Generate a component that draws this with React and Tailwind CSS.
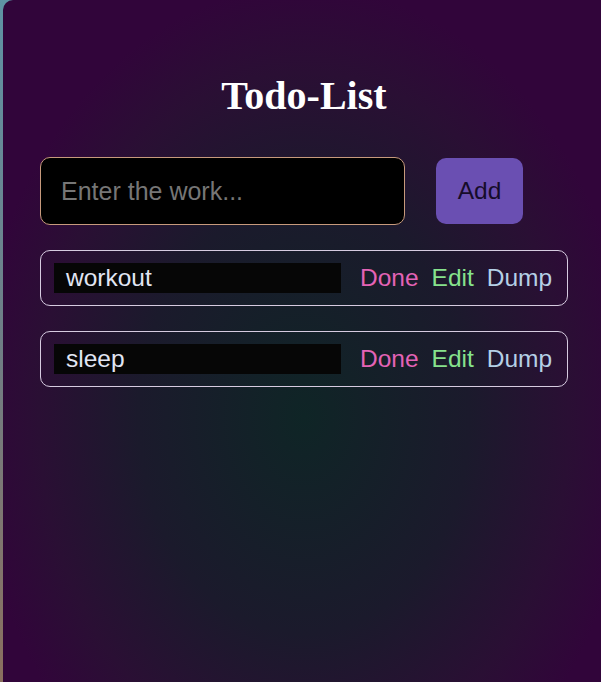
import React, { useState } from "react";

function App() {
  const [todos] = useState([
    { id: 1, text: "workout" },
    { id: 2, text: "sleep" },
  ]);
  const [work, setWork] = useState("");

  return (
    <div className="w-full h-[682px] overflow-hidden flex bg-gradient-to-b from-[#5e93a4] via-[#6f7e86] to-[#8a6f5e]">
      <div
        className="ml-[3px] w-[602px] shrink-0 h-[720px] rounded-tl-[10px] bg-[radial-gradient(ellipse_55%_60%_at_50%_58%,#0f2526_0%,#1b1a2c_50%,#2a0f34_80%,#31053a_100%)]"
        style={{ fontFamily: '"Liberation Sans", Arial, sans-serif' }}
      >
        <div className="w-[528px] mx-auto pt-[76px]">
          <h1
            className="text-center text-white font-bold text-[40px] leading-none"
            style={{ fontFamily: '"Liberation Serif", "Times New Roman", serif' }}
          >
            Todo-List
          </h1>

          <div className="flex items-center mt-[41px]">
            <input
              value={work}
              onChange={(e) => setWork(e.target.value)}
              placeholder="Enter the work..."
              className="w-[365px] h-[68px] bg-black border border-[#c79a7c] rounded-[10px] pl-[20px] text-[25px] text-white placeholder:text-[#767676] outline-none"
            />
            <button className="ml-[31px] w-[87px] h-[66px] rounded-[10px] bg-[#6a4fb2] text-[24.5px] text-[#160c2a]">
              Add
            </button>
          </div>

          {todos.map((todo) => (
            <div
              key={todo.id}
              className="mt-[25px] h-[56px] flex items-center border border-[#d6cbe0] rounded-[10px] pl-[13px]"
            >
              <div className="w-[287px] h-[30px] bg-[#060606] pl-[12px] flex items-center text-[24.5px] text-[#e1e5f3]">
                {todo.text}
              </div>
              <button className="ml-[19px] text-[24.5px] text-[#e463b6]">Done</button>
              <button className="ml-[13px] text-[24.5px] text-[#86e28c]">Edit</button>
              <button className="ml-[13px] text-[24.5px] text-[#b5d0e6]">Dump</button>
            </div>
          ))}
        </div>
      </div>
    </div>
  );
}

export default App;
